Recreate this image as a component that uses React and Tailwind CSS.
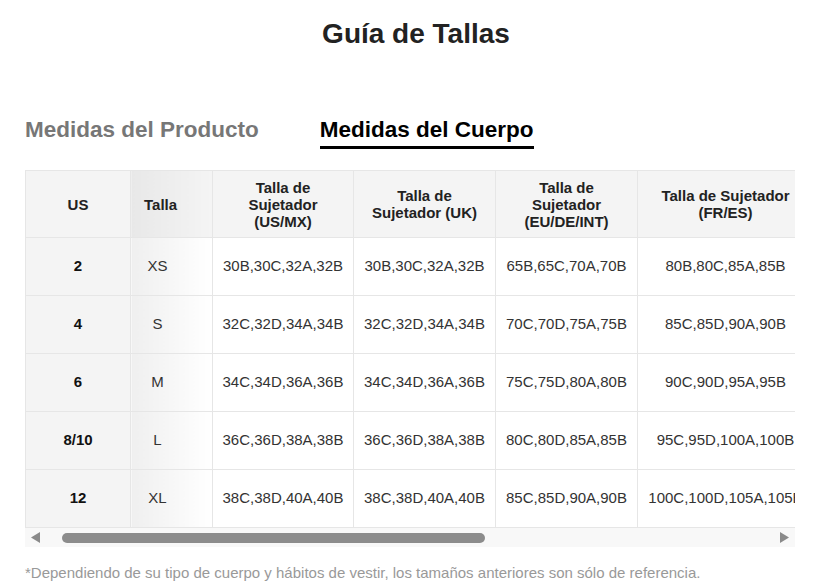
const columns = [
  { label: 'US', width: 'w-[105px]' },
  { label: 'Talla', width: 'w-[82px]' },
  { label: 'Talla de Sujetador (US/MX)', width: 'w-[141px]' },
  { label: 'Talla de Sujetador (UK)', width: 'w-[142px]' },
  { label: 'Talla de Sujetador (EU/DE/INT)', width: 'w-[142px]' },
  { label: 'Talla de Sujetador (FR/ES)', width: 'w-[176px]' },
];

const rows = [
  ['2', 'XS', '30B,30C,32A,32B', '30B,30C,32A,32B', '65B,65C,70A,70B', '80B,80C,85A,85B'],
  ['4', 'S', '32C,32D,34A,34B', '32C,32D,34A,34B', '70C,70D,75A,75B', '85C,85D,90A,90B'],
  ['6', 'M', '34C,34D,36A,36B', '34C,34D,36A,36B', '75C,75D,80A,80B', '90C,90D,95A,95B'],
  ['8/10', 'L', '36C,36D,38A,38B', '36C,36D,38A,38B', '80C,80D,85A,85B', '95C,95D,100A,100B'],
  ['12', 'XL', '38C,38D,40A,40B', '38C,38D,40A,40B', '85C,85D,90A,90B', '100C,100D,105A,105B'],
];

const App = () => {
  return (
    <div className="min-h-screen bg-white px-[25px] pt-[14px] font-['Liberation_Sans',Arial,sans-serif]">
      {/* Title */}
      <h1 className="text-center text-[28px] leading-[40px] font-bold text-[#222]">Guía de Tallas</h1>

      {/* Tabs */}
      <div className="mt-[62px] flex items-start gap-[61px]">
        <div className="text-[22.5px] leading-[28px] font-bold text-[#777] pb-[5px]">Medidas del Producto</div>
        <div className="text-[22.5px] leading-[28px] font-bold text-black pb-[2px] border-b-[3px] border-black">
          Medidas del Cuerpo
        </div>
      </div>

      {/* Table */}
      <div className="mt-[21px] w-[770px] overflow-hidden">
        <table className="table-fixed border-collapse text-[15px] w-[788px]">
          <thead>
            <tr className="h-[67px]">
              {columns.map((col, i) => (
                <th
                  key={col.label}
                  className={`${col.width} border border-[#e6e6e6] font-bold text-[#222] leading-[17px] px-2 ${
                    i === 1
                      ? 'text-left pl-[13px] bg-gradient-to-r from-[#e8e8e8] to-[#f4f4f4]'
                      : 'text-center bg-[#f4f4f4]'
                  }`}
                >
                  {col.label}
                </th>
              ))}
            </tr>
          </thead>
          <tbody>
            {rows.map((row) => (
              <tr key={row[0]} className="h-[58px]">
                {row.map((cell, i) => {
                  if (i === 0) {
                    return (
                      <td key={i} className="border border-[#e6e6e6] bg-[#f4f4f4] text-center font-bold text-[#111]">
                        {cell}
                      </td>
                    );
                  }
                  if (i === 1) {
                    return (
                      <td
                        key={i}
                        className="border border-[#e6e6e6] bg-gradient-to-r from-[#efefef] to-white text-center pr-[28px] text-[#333]"
                      >
                        {cell}
                      </td>
                    );
                  }
                  return (
                    <td key={i} className="border border-[#e6e6e6] text-center text-[#333] whitespace-nowrap">
                      {cell}
                    </td>
                  );
                })}
              </tr>
            ))}
          </tbody>
        </table>

        {/* Scrollbar */}
        <div className="h-[19px] bg-[#f8f8f8] flex items-center">
          <svg className="ml-[6px] w-[9px] h-[11px]" viewBox="0 0 9 11">
            <path d="M9 0 L0 5.5 L9 11 Z" fill="#8a8a8a" />
          </svg>
          <div className="ml-[22px] w-[423px] h-[10px] rounded-full bg-[#8c8c8c]" />
          <div className="flex-1" />
          <svg className="mr-[6px] w-[9px] h-[11px]" viewBox="0 0 9 11">
            <path d="M0 0 L9 5.5 L0 11 Z" fill="#8a8a8a" />
          </svg>
        </div>
      </div>

      {/* Note */}
      <p className="mt-[16px] text-[15px] leading-[20px] text-[#999]">
        *Dependiendo de su tipo de cuerpo y hábitos de vestir, los tamaños anteriores son sólo de referencia.
      </p>
    </div>
  );
};

export default App;
